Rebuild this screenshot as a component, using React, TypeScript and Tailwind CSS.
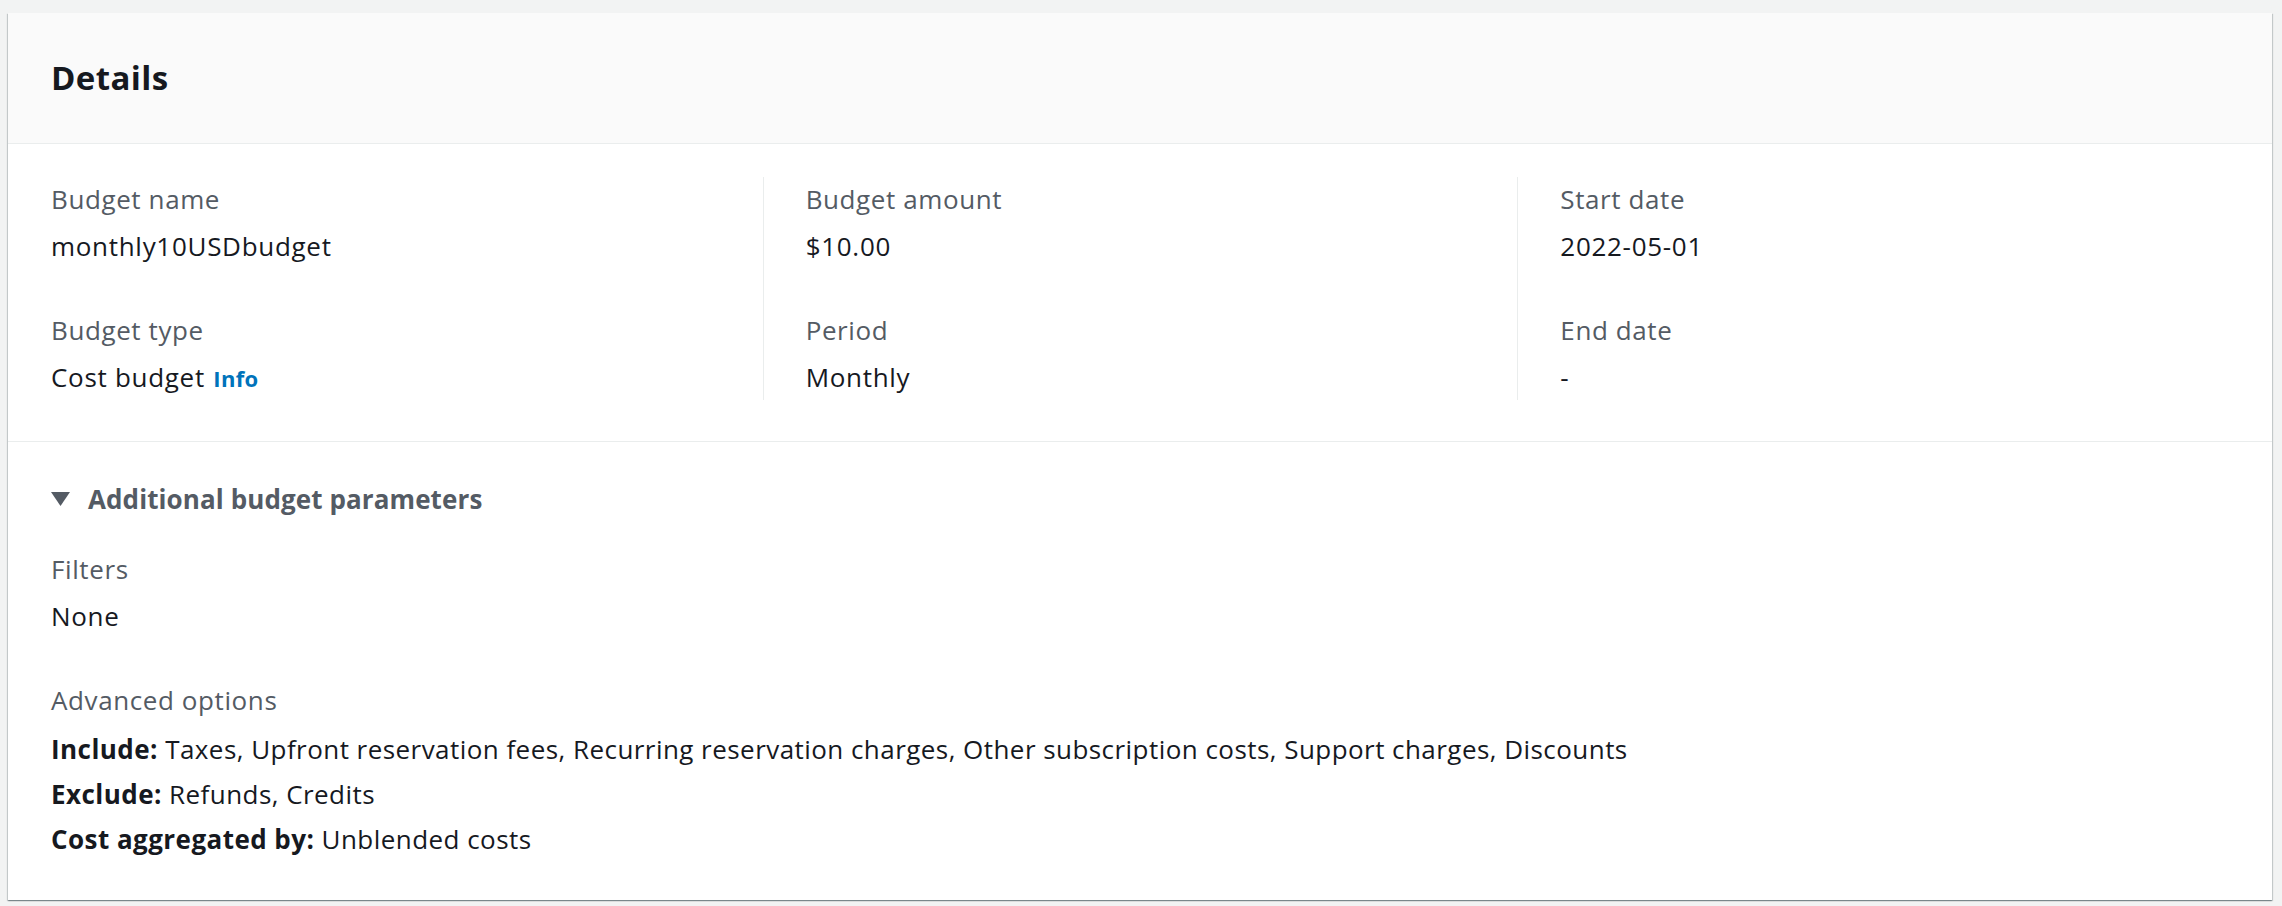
import React from 'react';

const font = { fontFamily: '"Open Sans", "Noto Sans", sans-serif' };

function Field({ label, children }: { label: string; children: React.ReactNode }) {
  return (
    <div>
      <div className="text-[26px] leading-[44px] tracking-[0.6px] text-[#545b64]">{label}</div>
      <div className="mt-[3px] text-[26px] leading-[44px] tracking-[0.7px] text-[#16191f]">{children}</div>
    </div>
  );
}

export default function App() {
  return (
    <div className="min-h-screen bg-[#f2f3f3] pt-[13px] pb-[8px] pl-[8px] pr-[10px]" style={font}>
      <div className="bg-white shadow-[0_1px_1px_0_rgba(0,28,36,0.3),1px_1px_1px_0_rgba(0,28,36,0.15),-1px_1px_1px_0_rgba(0,28,36,0.15)]">
        {/* header */}
        <div className="flex h-[131px] items-center border-b border-[#eaeded] bg-[#fafafa] pl-[43px]">
          <h2 className="text-[33px] font-bold leading-[44px] tracking-[0.4px] text-[#16191f]">Details</h2>
        </div>

        {/* key/value columns */}
        <div className="grid grid-cols-3 border-b border-[#eaeded] pt-[33px] pb-[41px]">
          <div className="flex flex-col gap-[40px] pl-[43px]">
            <Field label="Budget name">monthly10USDbudget</Field>
            <Field label="Budget type">
              Cost budget{' '}
              <span className="ml-[1px] text-[22px] font-bold tracking-[0.3px] text-[#0073bb]">Info</span>
            </Field>
          </div>
          <div className="flex flex-col gap-[40px] border-l border-[#eaeded] pl-[42px]">
            <Field label="Budget amount">$10.00</Field>
            <Field label="Period">Monthly</Field>
          </div>
          <div className="flex flex-col gap-[40px] border-l border-[#eaeded] pl-[42px]">
            <Field label="Start date">2022-05-01</Field>
            <Field label="End date">-</Field>
          </div>
        </div>

        {/* expandable section */}
        <div className="pt-[35px] pb-[38px] pl-[43px]">
          <div className="flex h-[44px] items-center text-[26px] font-bold tracking-[0.1px] text-[#545b64]">
            <svg width="19" height="14" viewBox="0 0 19 14" className="mr-[18px]">
              <polygon points="0,0 19,0 9.5,14" fill="#545b64" />
            </svg>
            Additional budget parameters
          </div>

          <div className="mt-[26px]">
            <Field label="Filters">None</Field>
          </div>

          <div className="mt-[40px]">
            <div className="text-[26px] leading-[44px] tracking-[0.6px] text-[#545b64]">Advanced options</div>
            <div className="mt-[5px] text-[26px] leading-[45px] tracking-[0.45px] text-[#16191f]">
              <div>
                <span className="font-bold">Include:</span> Taxes, Upfront reservation fees, Recurring reservation
                charges, Other subscription costs, Support charges, Discounts
              </div>
              <div>
                <span className="font-bold">Exclude:</span> Refunds, Credits
              </div>
              <div>
                <span className="font-bold">Cost aggregated by:</span> Unblended costs
              </div>
            </div>
          </div>
        </div>
      </div>
    </div>
  );
}
